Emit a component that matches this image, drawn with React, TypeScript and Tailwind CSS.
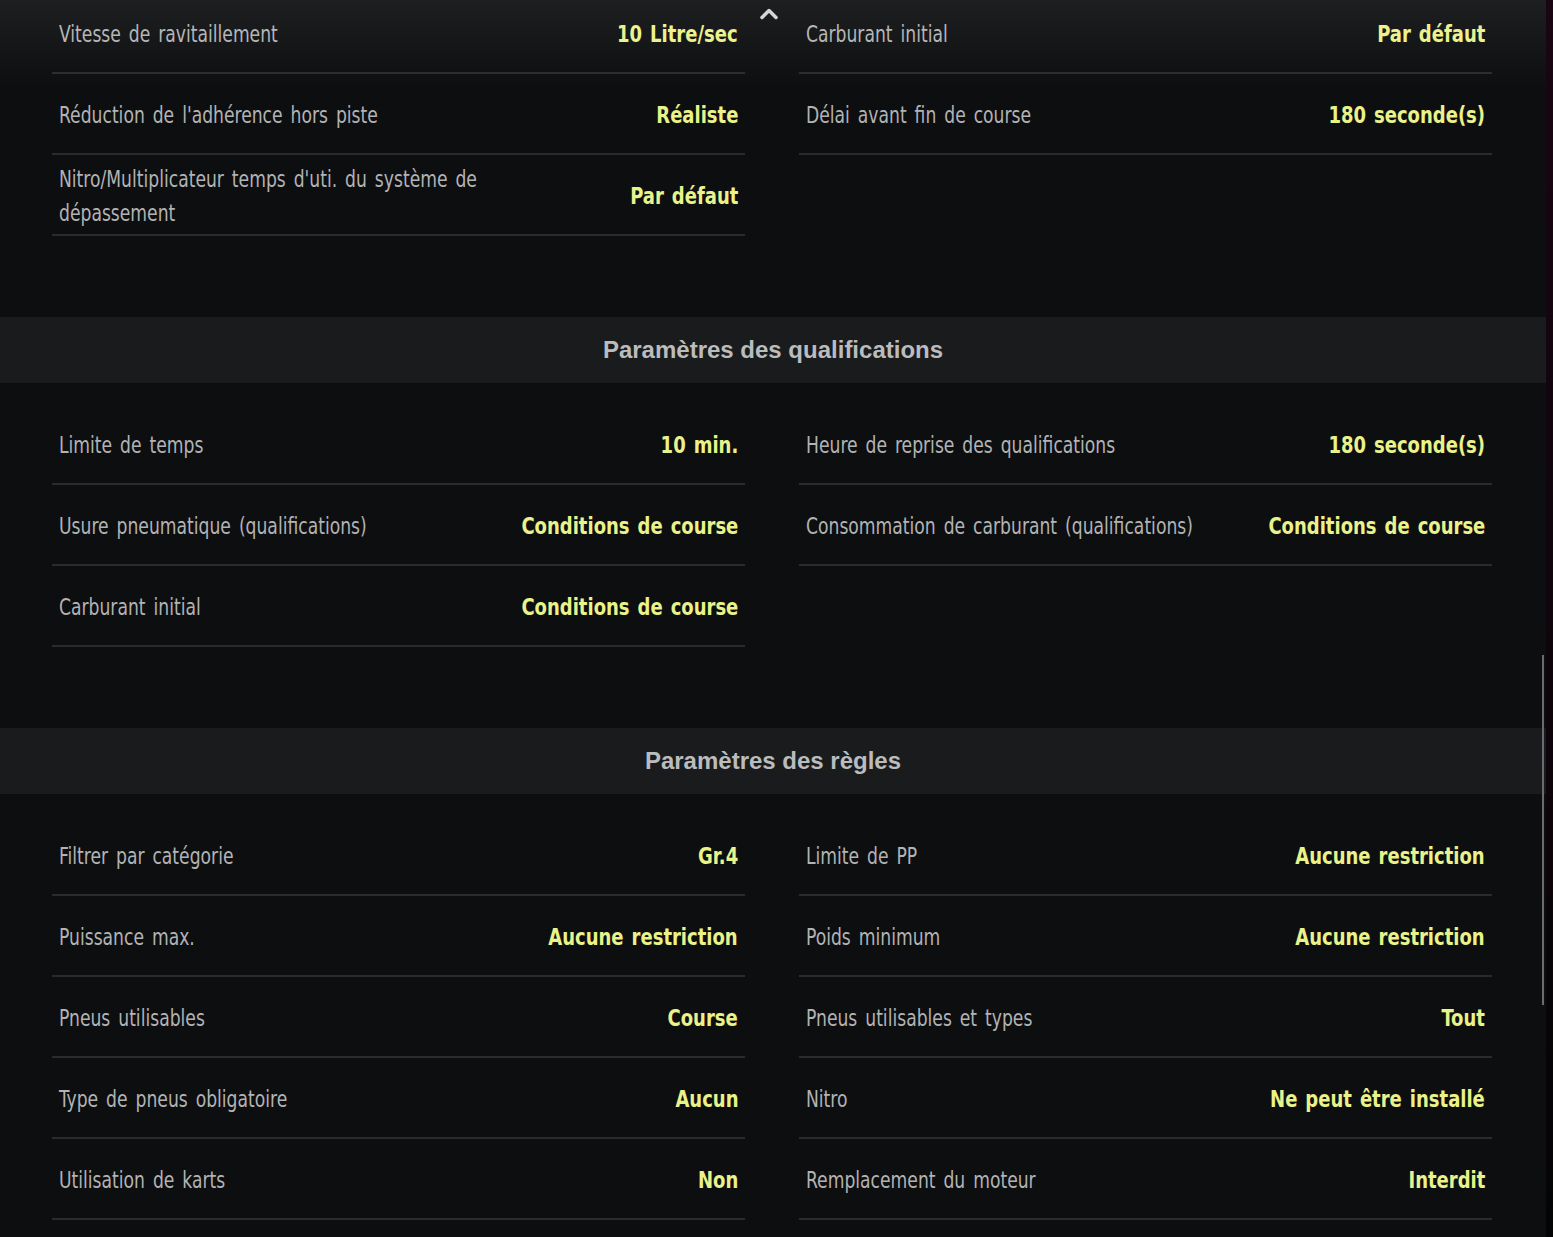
import React from 'react';
import { ChevronUp } from 'lucide-react';

interface Setting {
  label: string;
  value: string;
  wrap?: boolean;
}

interface Section {
  title?: string;
  left: Setting[];
  right: Setting[];
}

const sections: Section[] = [
  {
    left: [
      { label: 'Vitesse de ravitaillement', value: '10 Litre/sec' },
      { label: "Réduction de l'adhérence hors piste", value: 'Réaliste' },
      { label: "Nitro/Multiplicateur temps d'uti. du système de dépassement", value: 'Par défaut', wrap: true },
    ],
    right: [
      { label: 'Carburant initial', value: 'Par défaut' },
      { label: 'Délai avant fin de course', value: '180 seconde(s)' },
    ],
  },
  {
    title: 'Paramètres des qualifications',
    left: [
      { label: 'Limite de temps', value: '10 min.' },
      { label: 'Usure pneumatique (qualifications)', value: 'Conditions de course' },
      { label: 'Carburant initial', value: 'Conditions de course' },
    ],
    right: [
      { label: 'Heure de reprise des qualifications', value: '180 seconde(s)' },
      { label: 'Consommation de carburant (qualifications)', value: 'Conditions de course' },
    ],
  },
  {
    title: 'Paramètres des règles',
    left: [
      { label: 'Filtrer par catégorie', value: 'Gr.4' },
      { label: 'Puissance max.', value: 'Aucune restriction' },
      { label: 'Pneus utilisables', value: 'Course' },
      { label: 'Type de pneus obligatoire', value: 'Aucun' },
      { label: 'Utilisation de karts', value: 'Non' },
    ],
    right: [
      { label: 'Limite de PP', value: 'Aucune restriction' },
      { label: 'Poids minimum', value: 'Aucune restriction' },
      { label: 'Pneus utilisables et types', value: 'Tout' },
      { label: 'Nitro', value: 'Ne peut être installé' },
      { label: 'Remplacement du moteur', value: 'Interdit' },
    ],
  },
];

// the game font is a narrow grotesque; squeeze the condensed face a bit more
const Row: React.FC<{ item: Setting }> = ({ item }) => (
  <div className="h-[81px] flex items-center justify-between px-[7px] border-b-2 border-[#2a2b2d]">
    <span
      className={`min-w-0 mt-[2px] origin-left scale-x-[0.83] text-[23px] leading-[34px] text-[#b2b3b4] [word-spacing:3px] ${
        item.wrap ? 'max-w-[520px]' : 'whitespace-nowrap'
      }`}
    >
      {item.label}
    </span>
    <span className="shrink-0 mt-[4px] origin-right scale-x-[0.87] whitespace-nowrap text-[23px] font-bold text-[#eaf28a] [word-spacing:2px]">
      {item.value}
    </span>
  </div>
);

const App: React.FC = () => {
  return (
    <div className="w-full h-[1237px] overflow-hidden flex bg-[#050405] font-['Liberation_Sans_Narrow','DejaVu_Sans_Condensed',sans-serif]">
      <div className="relative flex-1 overflow-hidden bg-[#0d0e10]">
        <div className="-mt-[7px]">
          {sections.map((section, i) => (
            <div key={i}>
              {section.title && (
                <div className="h-[66px] flex items-center justify-center bg-[#1a1b1d]">
                  <h2 className="text-[24px] font-bold text-[#bbbcbd] font-['Liberation_Sans',Arial,sans-serif]">
                    {section.title}
                  </h2>
                </div>
              )}
              <div className={`grid grid-cols-2 gap-x-[54px] pl-[52px] pr-[54px] pb-[81px] ${section.title ? 'pt-[21px]' : ''}`}>
                <div>
                  {section.left.map((item) => (
                    <Row key={item.label} item={item} />
                  ))}
                </div>
                <div>
                  {section.right.map((item) => (
                    <Row key={item.label} item={item} />
                  ))}
                </div>
              </div>
            </div>
          ))}
        </div>

        {/* top fade + scroll up hint */}
        <div className="absolute inset-x-0 top-0 h-[90px] bg-gradient-to-b from-white/[0.07] to-transparent pointer-events-none" />
        <ChevronUp className="absolute left-[755px] top-0 text-[#d6d6d6]" size={28} strokeWidth={3} />

        {/* scrollbar thumb */}
        <div className="absolute right-[2px] top-[655px] h-[350px] w-[2px] bg-[#6b6c6e]" />
      </div>
      <div className="w-[7px] bg-gradient-to-b from-[#1a0514] to-[#050405]" />
    </div>
  );
};

export default App;
